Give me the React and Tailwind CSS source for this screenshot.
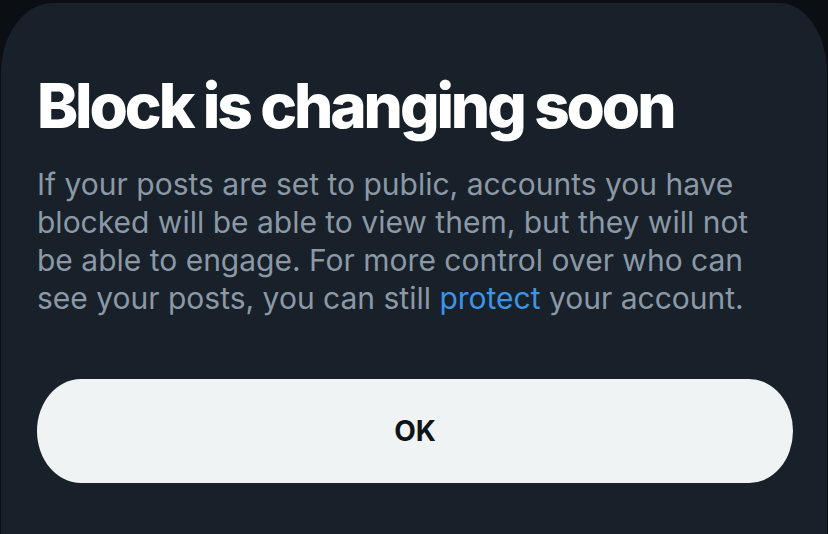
export default function App() {
  return (
    <div className="w-[828px] h-[534px] bg-[#0b0f13] pt-[3px] px-[1px] overflow-hidden" style={{ fontFamily: "Inter, 'Noto Sans', sans-serif" }}>
      <div className="h-[560px] bg-[#18202a] rounded-tl-[52px_70px] rounded-tr-[48px_70px] px-[36px] pt-[67px]">
        <h1 className="text-[62px] leading-[72px] font-extrabold text-white tracking-[-3.1px]">Block is changing soon</h1>
        <p className="mt-[23px] w-[750px] text-[30px] leading-[38px] text-[#8b98a5]">
          If your posts are set to public, accounts you have blocked will be able to view them, but they will not be able to engage. For more control over who can see your posts, you can still <span className="text-[#3d94e4]">protect</span> your account.
        </p>
        <button className="mt-[62px] w-[756px] h-[104px] rounded-[44px_/_52px] bg-[#eff3f4] text-[#0f1419] text-[28px] font-bold">OK</button>
      </div>
    </div>
  );
}
